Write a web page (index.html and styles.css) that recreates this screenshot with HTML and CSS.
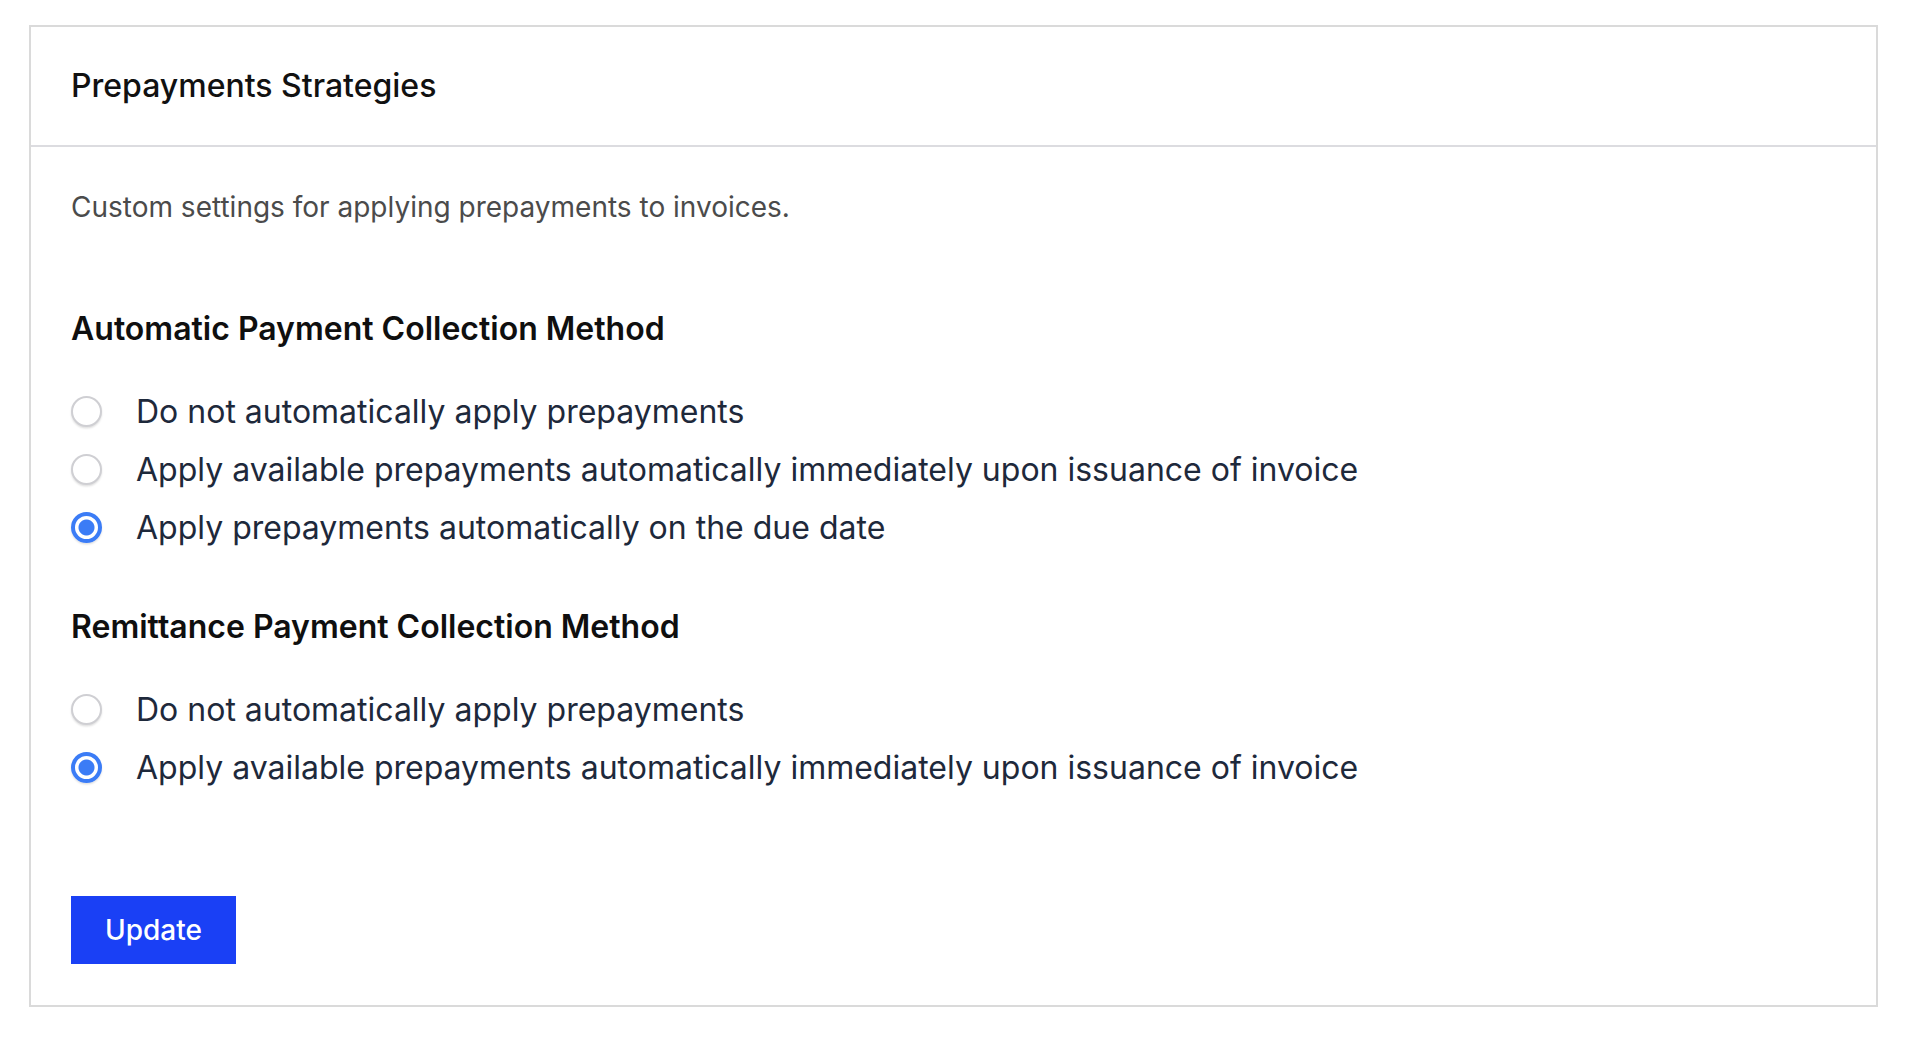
FILE: index.html
```html
<!DOCTYPE html>
<html lang="en">
<head>
<meta charset="utf-8">
<title>Prepayments Strategies</title>
<link rel="stylesheet" href="styles.css">
</head>
<body>
<div class="page">
  <section class="card">
    <header class="card-header">
      <h1 class="card-title">Prepayments Strategies</h1>
    </header>
    <div class="card-body">
      <p class="description">Custom settings for applying prepayments to invoices.</p>

      <div class="group group-auto" role="radiogroup">
        <h2 class="group-title">Automatic Payment Collection Method</h2>
        <div class="options">
          <label class="option"><input type="radio" name="auto" class="radio"><span>Do not automatically apply prepayments</span></label>
          <label class="option"><input type="radio" name="auto" class="radio"><span>Apply available prepayments automatically immediately upon issuance of invoice</span></label>
          <label class="option"><input type="radio" name="auto" class="radio" checked><span>Apply prepayments automatically on the due date</span></label>
        </div>
      </div>

      <div class="group group-remit" role="radiogroup">
        <h2 class="group-title">Remittance Payment Collection Method</h2>
        <div class="options">
          <label class="option"><input type="radio" name="remit" class="radio"><span>Do not automatically apply prepayments</span></label>
          <label class="option"><input type="radio" name="remit" class="radio" checked><span>Apply available prepayments automatically immediately upon issuance of invoice</span></label>
        </div>
      </div>

      <button type="button" class="btn-primary">Update</button>
    </div>
  </section>
</div>
</body>
</html>
```

FILE: styles.css
```css
* { box-sizing: border-box; }

html, body {
  margin: 0;
  padding: 0;
  background: #ffffff;
}

body {
  font-family: Inter, "Noto Sans", "Liberation Sans", sans-serif;
  color: #1e293b;
}

.page {
  padding: 25px 38px 0 29px;
}

.card {
  border: 2px solid #dadada;
  background: #ffffff;
}

.card-header {
  height: 120px;
  display: flex;
  align-items: center;
  padding: 0 40px;
  border-bottom: 2px solid #dcdce0;
}

.card-title {
  margin: 0;
  font-size: 32px;
  font-weight: 500;
  color: #111111;
  line-height: 1.2;
}

.card-body {
  padding: 40px 40px 41px;
}

.description {
  margin: 0;
  font-size: 28px;
  line-height: 40px;
  color: #4b4b4b;
}

.group-title {
  margin: 0;
  font-size: 32px;
  font-weight: 600;
  color: #0f0f0f;
  line-height: 40px;
}

.group-auto {
  margin-top: 82px;
}

.group-remit {
  margin-top: 51px;
}

.options {
  margin-top: 33px;
  display: flex;
  flex-direction: column;
}

.option {
  display: flex;
  align-items: center;
  height: 58px;
  font-size: 32px;
  color: #1e293b;
  cursor: pointer;
}

.radio {
  appearance: none;
  -webkit-appearance: none;
  margin: 0 34px 0 0;
  width: 31px;
  height: 31px;
  flex: 0 0 31px;
  border-radius: 50%;
  border: 2px solid #cfcfd3;
  background: #ffffff;
  box-shadow: 0 1.5px 2px rgba(0, 0, 0, 0.12);
}

.radio:checked {
  border: 4px solid #3b7cf6;
  background: radial-gradient(circle, #3b7cf6 0 7.5px, #ffffff 8.5px);
}

.btn-primary {
  display: block;
  margin-top: 100px;
  height: 68px;
  padding: 0 34px;
  border: 0;
  background: #1a40f5;
  color: #ffffff;
  font-family: inherit;
  font-size: 28px;
  font-weight: 500;
  cursor: pointer;
}
```
